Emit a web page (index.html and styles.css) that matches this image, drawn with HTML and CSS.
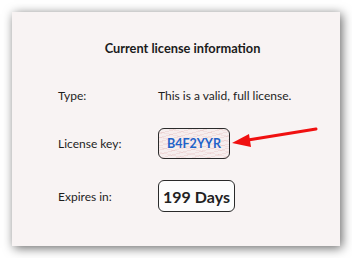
FILE: index.html
```html
<!DOCTYPE html>
<html lang="en">
<head>
  <meta charset="UTF-8">
  <title>License information</title>
  <link rel="stylesheet" href="styles.css">
</head>
<body>

  <div class="panel">
    <h1 class="title">Current license information</h1>

    <div class="info-row row-type">
      <span class="label">Type:</span>
      <span class="value">This is a valid, full license.</span>
    </div>

    <div class="info-row row-key">
      <span class="label">License key:</span>
      <span class="key-box">B4F2YYR</span>
    </div>

    <div class="info-row row-expires">
      <span class="label">Expires in:</span>
      <span class="days-box">199 Days</span>
    </div>

    <!-- red pointer added on the screenshot -->
    <svg class="arrow" width="100" height="30" viewBox="0 0 100 30">
      <line x1="96" y1="3" x2="28" y2="14" stroke="#f01010" stroke-width="3" stroke-linecap="round"/>
      <polygon points="12,17 29,8 31,21" fill="#f01010"/>
    </svg>
  </div>

</body>
</html>
```

FILE: styles.css
```css
body {
  margin: 0;
  background-color: #ffffff;
  font-family: "Lato", "Liberation Sans", sans-serif;
  font-size: 12px;
  color: #1e1e1e;
}

.panel {
  position: relative;
  box-sizing: border-box;
  width: 328px;
  height: 234px;
  margin: 12px;
  padding-top: 28px;
  background-color: #f8f3f3;
  box-shadow: 2px 2px 10px rgba(0, 0, 0, 0.6);
}

.title {
  margin: 0;
  padding-left: 13px;
  font-size: 12.8px;
  line-height: 16px;
  font-weight: bold;
  text-align: center;
  color: #1b1b1b;
}

.info-row {
  display: flex;
  align-items: center;
  padding-left: 46px;
}

.label {
  width: 100px;
  flex-shrink: 0;
}

.row-type {
  margin-top: 23px;
  height: 32px;
}

.row-key {
  margin-top: 17px;
  height: 31px;
}

.row-expires {
  margin-top: 21px;
  height: 32px;
}

.key-box {
  box-sizing: border-box;
  width: 72px;
  height: 31px;
  display: flex;
  align-items: center;
  justify-content: center;
  border: 1px solid #2a2a2a;
  border-radius: 6px;
  font-weight: bold;
  font-size: 12.5px;
  color: #1f63c9;
  background-color: #f6eeee;
  background-image:
    repeating-linear-gradient(165deg, rgba(210, 130, 130, 0.16) 0 1px, transparent 1px 4px),
    repeating-linear-gradient(12deg, rgba(210, 130, 130, 0.12) 0 1px, transparent 1px 5px);
}

.days-box {
  box-sizing: border-box;
  width: 77px;
  height: 32px;
  display: flex;
  align-items: center;
  justify-content: center;
  border: 1px solid #2a2a2a;
  border-radius: 6px;
  font-weight: bold;
  font-size: 16px;
  color: #222;
  background-color: #fdfdfd;
}

.arrow {
  position: absolute;
  left: 208px;
  top: 114px;
}
```
